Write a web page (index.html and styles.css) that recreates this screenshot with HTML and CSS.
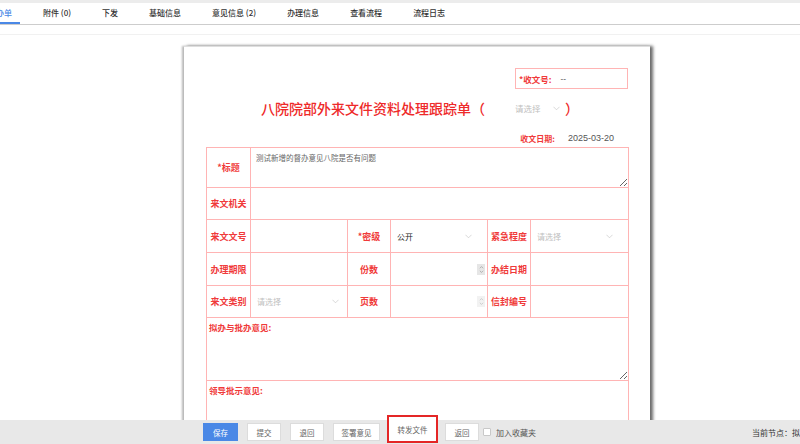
FILE: index.html
```html
<!DOCTYPE html>
<html lang="zh-CN">
<head>
    <meta charset="UTF-8">
    <title>外来文件资料处理跟踪单</title>
    <link rel="stylesheet" href="styles.css">
</head>
<body>
    <div class="top-strip"></div>
    <nav class="tabs">
        <a class="tab active">呈办单</a>
        <a class="tab">附件 (0)</a>
        <a class="tab">下发</a>
        <a class="tab">基础信息</a>
        <a class="tab">意见信息 (2)</a>
        <a class="tab">办理信息</a>
        <a class="tab">查看流程</a>
        <a class="tab">流程日志</a>
    </nav>
    <div class="sub-line"></div>

    <div class="sheet">
        <div class="doc-no-row">
            <div class="doc-no">
                <span class="lbl"><i>*</i>收文号:</span>
                <span class="doc-no-val">--</span>
            </div>
        </div>

        <div class="title-row">
            <h1 class="sheet-title">八院院部外来文件资料处理跟踪单（</h1>
            <div class="select title-select">
                <span>请选择</span>
                <svg class="chev" viewBox="0 0 8 5"><path d="M0.5 0.5 L4 4 L7.5 0.5"/></svg>
            </div>
            <span class="sheet-title paren">）</span>
        </div>

        <div class="date-row">
            <span class="lbl">收文日期:</span>
            <span class="date">2025-03-20</span>
        </div>

        <table class="form">
            <colgroup>
                <col style="width:44px">
                <col style="width:97px">
                <col style="width:43px">
                <col style="width:97px">
                <col style="width:43px">
                <col style="width:98px">
            </colgroup>
            <tr class="r-title">
                <td class="label"><i>*</i>标题</td>
                <td colspan="5" class="area-cell"><textarea class="area area-title" readonly>测试新增的督办意见八院是否有问题</textarea></td>
            </tr>
            <tr class="r-32">
                <td class="label">来文机关</td>
                <td colspan="5"></td>
            </tr>
            <tr class="r-33">
                <td class="label">来文文号</td>
                <td></td>
                <td class="label"><i>*</i>密级</td>
                <td>
                    <div class="select filled pad-15">
                        <span>公开</span>
                        <svg class="chev" viewBox="0 0 8 5"><path d="M0.5 0.5 L4 4 L7.5 0.5"/></svg>
                    </div>
                </td>
                <td class="label">紧急程度</td>
                <td>
                    <div class="select pad-15">
                        <span>请选择</span>
                        <svg class="chev" viewBox="0 0 8 5"><path d="M0.5 0.5 L4 4 L7.5 0.5"/></svg>
                    </div>
                </td>
            </tr>
            <tr class="r-33">
                <td class="label">办理期限</td>
                <td></td>
                <td class="label">份数</td>
                <td>
                    <div class="num">
                        <span class="spin">
                            <svg viewBox="0 0 6 10"><path d="M1 3.5 L3 1.5 L5 3.5 M1 6.5 L3 8.5 L5 6.5"/></svg>
                        </span>
                    </div>
                </td>
                <td class="label">办结日期</td>
                <td></td>
            </tr>
            <tr class="r-32">
                <td class="label">来文类别</td>
                <td>
                    <div class="select pad-8">
                        <span>请选择</span>
                        <svg class="chev" viewBox="0 0 8 5"><path d="M0.5 0.5 L4 4 L7.5 0.5"/></svg>
                    </div>
                </td>
                <td class="label">页数</td>
                <td>
                    <div class="num">
                        <span class="spin light">
                            <svg viewBox="0 0 6 10"><path d="M1 3.5 L3 1.5 L5 3.5 M1 6.5 L3 8.5 L5 6.5"/></svg>
                        </span>
                    </div>
                </td>
                <td class="label">信封编号</td>
                <td></td>
            </tr>
            <tr class="r-opinion">
                <td colspan="6" class="opinion">
                    <div class="opinion-lbl">拟办与批办意见:</div>
                    <textarea class="area area-opinion" readonly></textarea>
                </td>
            </tr>
            <tr class="r-opinion">
                <td colspan="6" class="opinion">
                    <div class="opinion-lbl">领导批示意见:</div>
                    <textarea class="area area-opinion" readonly></textarea>
                </td>
            </tr>
        </table>
    </div>

    <div class="footer">
        <button class="btn btn-primary">保存</button>
        <button class="btn">提交</button>
        <button class="btn">退回</button>
        <button class="btn btn-wide">签署意见</button>
        <button class="btn btn-mark">转发文件</button>
        <button class="btn">返回</button>
        <label class="fav"><span class="box"></span>加入收藏夹</label>
        <span class="node">当前节点：拟</span>
    </div>
</body>
</html>
```

FILE: styles.css
```css
:root {
    --red: #f03a3a;
    --line: #ffb4b4;
    --blue: #4a88e6;
    --gray-text: #666;
}

* {
    box-sizing: border-box;
}

html, body {
    margin: 0;
    height: 444px;
    overflow: hidden;
}

body {
    font-family: "Noto Sans CJK SC", "Noto Sans", sans-serif;
    background: #fff;
    color: #333;
}

/* tab strip */
.top-strip {
    height: 3px;
    background: #ececec;
}

.tabs {
    display: flex;
    height: 22px;
    margin-left: -20px;
    border-bottom: 1px solid #cdcdcd;
}

.tab {
    padding: 0 8px;
    margin-right: 15px;
    font-size: 8px;
    font-weight: 500;
    line-height: 20px;
    color: #333;
    border-bottom: 2px solid transparent;
    white-space: nowrap;
}

.tab.active {
    color: var(--blue);
    border-bottom-color: var(--blue);
}

.sub-line {
    height: 1px;
    margin-top: 9px;
    background: #f1f1f1;
}

/* paper */
.sheet {
    width: 466px;
    height: 420px;
    margin: 11px 0 0 184px;
    padding: 21px 22px 0;
    background: #fff;
    border-top: 1px solid #dedede;
    box-shadow: -2px 0 2px #b8b8b8, 3px 0 3px #6a6a6a;
}

.lbl {
    color: var(--red);
    font-weight: 700;
    font-size: 8px;
}

.lbl i, .label i {
    font-style: normal;
}

.doc-no-row {
    display: flex;
    justify-content: flex-end;
}

.doc-no {
    width: 113px;
    height: 21px;
    display: flex;
    align-items: center;
    gap: 9px;
    padding-left: 3px;
    border: 1px solid var(--line);
}

.doc-no .lbl {
    font-size: 8.5px;
}

.doc-no-val {
    font-size: 8px;
    color: #333;
}

.title-row {
    display: flex;
    align-items: center;
    justify-content: center;
    height: 24px;
    margin-top: 7px;
    padding-left: 6px;
}

.sheet-title {
    margin: 0;
    font-size: 14px;
    font-weight: 500;
    color: #ee2a2a;
    white-space: nowrap;
}

/* selects */
.select {
    display: flex;
    align-items: center;
    justify-content: space-between;
    padding-left: 6px;
    font-size: 8px;
    color: #c0c0c0;
}

.select.filled {
    color: #222;
}

.title-row .title-select {
    width: 80px;
    padding-left: 30px;
    justify-content: flex-start;
    gap: 12px;
    font-size: 8.5px;
}

.pad-15 { padding-right: 15px; }
.pad-8 { padding-right: 8px; }

.chev {
    width: 7px;
    height: 5px;
    fill: none;
    stroke: #c8c8c8;
    stroke-width: 0.8;
}

.date-row {
    display: flex;
    justify-content: flex-end;
    align-items: center;
    gap: 13px;
    height: 14px;
    margin-top: 11px;
    padding-right: 14px;
}

.date {
    font-family: "Liberation Sans", "Noto Sans CJK SC", sans-serif;
    font-size: 9px;
    color: #555;
}

/* form table */
.form {
    width: 422px;
    margin-top: 2px;
    table-layout: fixed;
    border-collapse: collapse;
}

.form td {
    padding: 0;
    border: 1px solid var(--line);
}

.r-title td { height: 40px; }
.r-32 td { height: 32px; }
.r-33 td { height: 33px; }
.r-opinion td { height: 62px; }

.form .label {
    text-align: center;
    font-size: 9px;
    font-weight: 700;
    color: var(--red);
    white-space: nowrap;
}

.area {
    display: block;
    width: 100%;
    border: none;
    outline: none;
    background: transparent;
    font-family: inherit;
    font-size: 7.5px;
    color: var(--gray-text);
    resize: vertical;
}

.area-title {
    height: 38px;
    padding: 3px 5px;
}

.num {
    display: flex;
    justify-content: flex-end;
    padding-right: 2px;
}

.spin {
    width: 8px;
    height: 11px;
    display: flex;
    align-items: center;
    justify-content: center;
    background: #e6e6e6;
}

.spin.light {
    background: #f2f2f2;
}

.spin svg {
    width: 5px;
    height: 9px;
    fill: none;
    stroke: #999;
    stroke-width: 0.8;
}

.spin.light svg {
    stroke: #bbb;
}

.opinion {
    vertical-align: top;
}

.opinion-lbl {
    padding: 3px 2px 0;
    font-size: 8.5px;
    font-weight: 700;
    line-height: 12px;
    color: var(--red);
}

.area-opinion {
    height: 47px;
}

/* bottom bar */
.footer {
    position: fixed;
    left: 0;
    right: 0;
    bottom: 0;
    height: 24px;
    display: flex;
    align-items: center;
    gap: 9px;
    padding-left: 203px;
    background: #e8e8e8;
}

.btn {
    width: 34px;
    height: 18px;
    padding: 0;
    font-family: inherit;
    font-size: 7.5px;
    color: var(--gray-text);
    background: #fff;
    border: 1px solid #dcdcdc;
    flex-shrink: 0;
}

.btn-primary {
    width: 35px;
    color: #fff;
    background: var(--blue);
    border-color: var(--blue);
}

.btn-wide {
    width: 47px;
}

.btn-mark {
    width: 51px;
    height: 28px;
    margin: -6px -2px 0;
    border: 2px solid #e42626;
}

.fav {
    display: flex;
    align-items: center;
    gap: 5px;
    margin-left: -5px;
    font-size: 8px;
    color: #555;
    white-space: nowrap;
}

.fav .box {
    width: 8px;
    height: 8px;
    background: #fff;
    border: 1px solid #c8c8c8;
    border-radius: 1px;
}

.node {
    margin-left: auto;
    margin-right: 0;
    font-size: 8px;
    color: #333;
    white-space: nowrap;
    flex-shrink: 0;
}
```
